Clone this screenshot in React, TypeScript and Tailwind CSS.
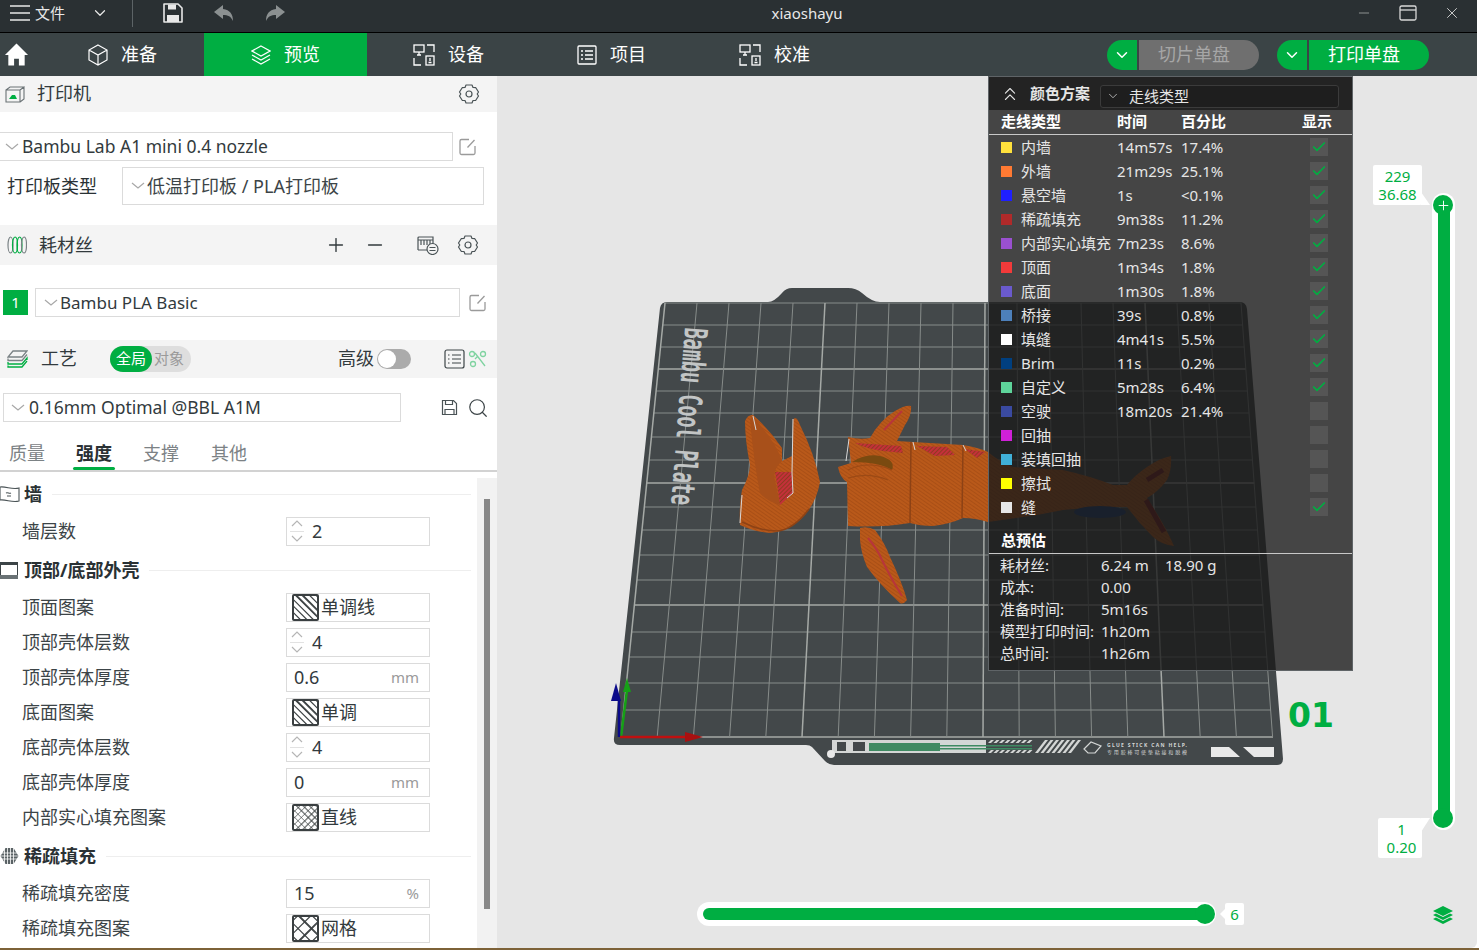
import React from 'react';
import { Check, ChevronDown, ChevronsUp, Minus, Plus, Search, X } from 'lucide-react';

const GREEN = '#00ae42';

// Legend rows: name, colour, time, percent, shown
const legendRows: [string, string, string, string, boolean][] = [
  ['内墙', '#ffe13c', '14m57s', '17.4%', true],
  ['外墙', '#ff7a33', '21m29s', '25.1%', true],
  ['悬空墙', '#1f1fff', '1s', '<0.1%', true],
  ['稀疏填充', '#b02a2a', '9m38s', '11.2%', true],
  ['内部实心填充', '#9a50d0', '7m23s', '8.6%', true],
  ['顶面', '#f23a3a', '1m34s', '1.8%', true],
  ['底面', '#6a5acd', '1m30s', '1.8%', true],
  ['桥接', '#4d80ba', '39s', '0.8%', true],
  ['填缝', '#ffffff', '4m41s', '5.5%', true],
  ['Brim', '#003f7f', '11s', '0.2%', true],
  ['自定义', '#5ed49a', '5m28s', '6.4%', true],
  ['空驶', '#3a4aa0', '18m20s', '21.4%', false],
  ['回抽', '#d020d8', '', '', false],
  ['装填回抽', '#40b0d8', '', '', false],
  ['擦拭', '#ffff00', '', '', false],
  ['缝', '#e6e6e6', '', '', true],
];

const totals: [string, string, string][] = [
  ['耗材丝:', '6.24 m', '18.90 g'],
  ['成本:', '0.00', ''],
  ['准备时间:', '5m16s', ''],
  ['模型打印时间:', '1h20m', ''],
  ['总时间:', '1h26m', ''],
];

const Chevron = () => (
  <svg width="16" height="8" viewBox="0 0 16 8" className="shrink-0">
    <path d="M2 1l6 5 6-5" fill="none" stroke="#a8a8a8" strokeWidth="1.2" />
  </svg>
);

const EditIcon = () => (
  <svg width="20" height="20" viewBox="0 0 20 20" className="shrink-0">
    <path d="M11 2.500H3.500a1.500 1.500 0 0 0-1.500 1.500v12a1.500 1.500 0 0 0 1.500 1.500h12a1.500 1.500 0 0 0 1.500-1.500V9" fill="none" stroke="#9a9a9a" strokeWidth="1.300" />
    <path d="M9.500 10.500L16.500 3" fill="none" stroke="#9a9a9a" strokeWidth="1.300" />
  </svg>
);

const Gear = () => (
  <svg width="22" height="22" viewBox="0 0 22 22" className="shrink-0">
    <path d="M8 2h6l1 2.500 2.800.2L20.500 9l-1.300 2 1.300 2-2.700 4.300-2.800.2L14 20H8l-1-2.500-2.800-.2L1.500 13l1.300-2-1.300-2 2.700-4.300 2.800-.2z" fill="none" stroke="#4a5356" strokeWidth="1.200" strokeLinejoin="round" />
    <circle cx="11" cy="11" r="3" fill="none" stroke="#4a5356" strokeWidth="1.200" />
  </svg>
);

const Hatch = ({ kind }: { kind: 'mono' | 'dense' | 'grid' }) => {
  const d = Array.from({ length: kind === 'grid' ? 3 : kind === 'dense' ? 8 : 6 }, (_, i) => i);
  const step = kind === 'grid' ? 13 : kind === 'dense' ? 6.5 : 6.5;
  return (
    <svg width="27" height="27" viewBox="0 0 27 27" className="shrink-0">
      <rect width="27" height="27" rx="1.500" fill="#fff" />
      <g stroke="#3a3f41" strokeWidth={kind === 'dense' ? 0.7 : 1.2}>
        {d.map((i) => (
          <React.Fragment key={i}>
            <line x1={-27 + i * step + step / 2} y1="0" x2={i * step + step / 2} y2="27" />
            <line x1={i * step + step / 2} y1="0" x2={27 + i * step + step / 2} y2="27" />
            {kind !== 'mono' && <line x1={i * step + step / 2} y1="0" x2={-27 + i * step + step / 2} y2="27" />}
            {kind !== 'mono' && <line x1={27 + i * step + step / 2} y1="0" x2={i * step + step / 2} y2="27" />}
          </React.Fragment>
        ))}
      </g>
      <rect x="1" y="1" width="25" height="25" rx="1" fill="none" stroke="#3a3f41" strokeWidth="2" />
    </svg>
  );
};

const Spin = () => (
  <svg width="16" height="27" viewBox="0 0 16 27" className="shrink-0">
    <path d="M3 8l5-5 5 5M3 18l5 5 5-5" fill="none" stroke="#b5b5b5" strokeWidth="1.200" />
    <line x1="1" y1="13.500" x2="15" y2="13.500" stroke="#e2e2e2" />
  </svg>
);

const Row = ({ label, children }: { label: string; children: React.ReactNode }) => (
  <div className="h-[35px] flex items-center pl-[22px]">
    <span className="w-[264px] text-[18px] text-[#3c4447]">{label}</span>
    <div className="w-[144px] h-[29px] border border-[#dbdbdb] flex items-center text-[18px] text-[#323a3d] bg-white">{children}</div>
  </div>
);

const SpinRow = ({ label, value }: { label: string; value: string }) => (
  <Row label={label}>
    <span className="ml-[2px] mr-[7px]"><Spin /></span>
    {value}
  </Row>
);

const UnitRow = ({ label, value, unit }: { label: string; value: string; unit: string }) => (
  <Row label={label}>
    <span className="ml-[7px] flex-1">{value}</span>
    <span className="mr-[10px] text-[15px] text-[#9a9a9a]">{unit}</span>
  </Row>
);

const PatternRow = ({ label, value, kind }: { label: string; value: string; kind: 'mono' | 'dense' | 'grid' }) => (
  <Row label={label}>
    <span className="ml-[5px] mr-[2px] flex"><Hatch kind={kind} /></span>
    {value}
  </Row>
);

const Section = ({ icon, title }: { icon: React.ReactNode; title: string }) => (
  <div className="h-[41px] pt-[1px] flex items-center">
    <span className="w-[24px] flex shrink-0">{icon}</span>
    <span className="text-[18px] font-bold text-[#2a3134]">{title}</span>
    <span className="ml-[10px] mr-[6px] flex-1 h-px bg-[#eeeeee]" />
  </div>
);

const TabItem = ({ icon, label, active }: { icon: React.ReactNode; label: string; active?: boolean }) => (
  <div className={`w-[163px] h-full flex items-center justify-center gap-[13px] text-[18px] text-white ${active ? 'bg-[#00ae42]' : ''}`}>
    {icon}
    <span>{label}</span>
  </div>
);

const DeviceIcon = () => (
  <svg width="22" height="22" viewBox="0 0 22 22" fill="none" stroke="#fff" strokeWidth="1.300">
    <rect x="1" y="1" width="10" height="7" />
    <path d="M4 11h4M6 8v3M14 1h7v7M1 14v7h7" />
    <rect x="13" y="12" width="8" height="9" />
    <path d="M17 14v3M15.500 18.500h3" />
  </svg>
);

const SplitButton = ({ label, muted }: { label: string; muted?: boolean }) => (
  <div className="flex h-[30px] gap-[2px]">
    <div className="w-[30px] rounded-l-[15px] bg-[#00ae42] flex items-center justify-center text-white">
      <ChevronDown size={18} strokeWidth={2} />
    </div>
    <div className={`w-[120px] pr-[10px] rounded-r-[15px] flex items-center justify-center text-[18px] ${muted ? 'bg-[#6f6f6f] text-[#a6a6a6]' : 'bg-[#00ae42] text-white'}`}>
      {label}
    </div>
  </div>
);

const TitleBar = () => (
  <div className="h-[33px] shrink-0 bg-[#2a3033] border-b border-black pb-[6px] flex items-center text-[#e8e8e8]">
    <svg width="20" height="18" viewBox="0 0 20 18" className="ml-[10px]">
      <path d="M0 2h20M0 9h20M0 16h20" stroke="#e8e8e8" strokeWidth="1.500" />
    </svg>
    <span className="ml-[5px] text-[15px] w-[56px]">文件</span>
    <ChevronDown size={18} strokeWidth={1.600} />
    <span className="ml-[23px] w-px h-[28px] bg-[#5c6366]" />
    <svg width="20" height="20" viewBox="0 0 20 20" className="ml-[30px]">
      <path d="M1 1h14l4 4v14H1z" fill="none" stroke="#e8e8e8" strokeWidth="1.600" strokeLinejoin="round" />
      <path d="M5 1.500h8v5H5zM4 12h12v7H4z" fill="#e8e8e8" />
    </svg>
    <svg width="20" height="16" viewBox="0 0 20 16" className="ml-[31px]">
      <path d="M9 0L0 7l9 7v-4c5 0 8 1.500 10 6 0-7-3-11-10-12z" fill="#8b9091" />
    </svg>
    <svg width="20" height="16" viewBox="0 0 20 16" className="ml-[31px]">
      <path d="M11 0l9 7-9 7v-4c-5 0-8 1.500-10 6 0-7 3-11 10-12z" fill="#8b9091" />
    </svg>
    <span className="ml-[482px] w-[80px] text-center text-[15px]">xiaoshayu</span>
    <span className="flex-1" />
    <Minus size={16} strokeWidth={1.200} className="mr-[27px] text-[#a6a9aa]" />
    <svg width="18" height="16" viewBox="0 0 18 16" className="mr-[26px]">
      <rect x="1" y="1" width="16" height="14" rx="1.500" fill="none" stroke="#d8d8d8" strokeWidth="1.300" />
      <path d="M1 5h16" stroke="#d8d8d8" strokeWidth="1.300" />
    </svg>
    <X size={18} strokeWidth={1.200} className="mr-[16px] text-[#d8d8d8]" />
  </div>
);

const TabBar = () => (
  <div className="h-[43px] shrink-0 bg-[#3b4446] flex items-center">
    <div className="w-[41px] pl-[4px] flex">
      <svg width="25" height="25" viewBox="0 0 26 25">
        <path d="M13 1L1 13h3.500v11h6v-7h5v7h6V13H25z" fill="#fff" />
      </svg>
    </div>
    <TabItem
      label="准备"
      icon={
        <svg width="20" height="22" viewBox="0 0 20 22" fill="none" stroke="#fff" strokeWidth="1.200">
          <path d="M10 1l9 5v10l-9 5-9-5V6zM1 6l9 5 9-5M10 11v10" />
        </svg>
      }
    />
    <TabItem
      active
      label="预览"
      icon={
        <svg width="20" height="20" viewBox="0 0 20 20" fill="none" stroke="#fff" strokeWidth="1.200">
          <path d="M10 1l9 5-9 5-9-5zM1 10l9 5 9-5M1 14l9 5 9-5" />
        </svg>
      }
    />
    <TabItem label="设备" icon={<DeviceIcon />} />
    <TabItem
      label="项目"
      icon={
        <svg width="20" height="20" viewBox="0 0 20 20" fill="none" stroke="#fff" strokeWidth="1.300">
          <rect x="1" y="1" width="18" height="18" rx="1" />
          <path d="M4 6h2M8 6h8M4 10h2M8 10h8M4 14h2M8 14h8" />
        </svg>
      }
    />
    <TabItem label="校准" icon={<DeviceIcon />} />
    <div className="ml-[251px] flex gap-[18px]">
      <SplitButton label="切片单盘" muted />
      <SplitButton label="打印单盘" />
    </div>
  </div>
);

const Sidebar = () => (
  <div className="w-[497px] shrink-0 h-full bg-white overflow-hidden">
    {/* Printer */}
    <div className="h-[36px] bg-[#f4f4f4] flex items-center pl-[5px] pr-[17px] pb-[1px]">
      <svg width="20" height="18" viewBox="0 0 20 18" fill="none" stroke="#6a7275" strokeWidth="1.100" className="shrink-0">
        <path d="M1 5h14v12H1zM15 5l4-3v12l-4 3M1 5l4-3h14" />
        <path d="M4 14h8l-2-4H7z" fill="#00ae42" stroke="none" />
      </svg>
      <span className="ml-[12px] flex-1 text-[18px] text-[#323a3d]">打印机</span>
      <Gear />
    </div>
    <div className="mt-[20px] flex items-center h-[29px]">
      <div className="w-[453px] h-full border border-l-0 border-[#dbdbdb] flex items-center pl-[4px] gap-[2px] text-[17.500px] text-[#323a3d]">
        <Chevron />
        Bambu Lab A1 mini 0.4 nozzle
      </div>
      <span className="ml-[5px] flex"><EditIcon /></span>
    </div>
    <div className="mt-[6px] flex items-center h-[38px]">
      <span className="ml-[7px] w-[115px] text-[18px] text-[#2a3134]">打印板类型</span>
      <div className="w-[362px] h-full border border-[#dbdbdb] flex items-center pl-[7px] gap-[1px] text-[18px] text-[#3c4447]">
        <Chevron />
        低温打印板 / PLA打印板
      </div>
    </div>

    {/* Filament */}
    <div className="mt-[20px] h-[40px] bg-[#f4f4f4] flex items-center pl-[7px] pr-[18px]">
      <svg width="20" height="18" viewBox="0 0 20 18" fill="none" strokeWidth="1.200" className="shrink-0">
        <ellipse cx="3.500" cy="9" rx="2.500" ry="8" stroke="#7a8285" />
        <ellipse cx="8" cy="9" rx="2.500" ry="8" stroke="#00ae42" />
        <ellipse cx="12.500" cy="9" rx="2.500" ry="8" stroke="#00ae42" />
        <ellipse cx="17" cy="9" rx="2.500" ry="8" stroke="#7a8285" />
      </svg>
      <span className="ml-[12px] text-[18px] text-[#323a3d]">耗材丝</span>
      <Plus size={22} strokeWidth={1.500} className="ml-[232px] text-[#323a3d]" />
      <Minus size={22} strokeWidth={1.500} className="ml-[17px] text-[#323a3d]" />
      <svg width="23" height="20" viewBox="0 0 23 20" fill="none" stroke="#4a5356" strokeWidth="1.200" className="ml-[30px] shrink-0">
        <path d="M2 15V3a1 1 0 0 1 1-1h14v7M2 5h15M2 15h9" />
        <path d="M5 5v5M8 5v5M11 5v5M14 5v4" />
        <circle cx="16.500" cy="14" r="5.500" fill="#f4f4f4" />
        <path d="M13.500 12.500h6M19.500 15.500h-6" />
      </svg>
      <span className="ml-[18px] flex"><Gear /></span>
    </div>
    <div className="mt-[23px] flex items-center h-[29px]">
      <div className="ml-[3px] w-[25px] h-[25px] bg-[#00ae42] text-white text-[15px] flex items-center justify-center">1</div>
      <div className="ml-[7px] w-[425px] h-full border border-[#dbdbdb] flex items-center pl-[7px] gap-[1px] text-[17px] text-[#323a3d]">
        <Chevron />
        Bambu PLA Basic
      </div>
      <span className="ml-[8px] flex"><EditIcon /></span>
    </div>

    {/* Process */}
    <div className="mt-[23px] h-[38px] bg-[#f4f4f4] flex items-center pl-[7px] pb-[1px]">
      <svg width="21" height="18" viewBox="0 0 21 18" fill="none" strokeWidth="1.300" className="shrink-0">
        <path d="M6 1h14l-5 6H1z" stroke="#7a8285" />
        <path d="M1 8.500v2h14l5-6" stroke="#7a8285" />
        <path d="M1 12v2h14l5-6v2" stroke="#00ae42" />
        <path d="M1 15.500v1.500h14l5-6" stroke="#00ae42" />
      </svg>
      <span className="ml-[13px] text-[18px] text-[#323a3d]">工艺</span>
      <div className="ml-[33px] w-[81px] h-[26px] rounded-[13px] bg-[#dedede] flex items-center text-[15px]">
        <span className="w-[42px] h-full rounded-[13px] bg-[#00ae42] text-white flex items-center justify-center">全局</span>
        <span className="ml-[2px] text-[#9a9a9a]">对象</span>
      </div>
      <span className="ml-[147px] text-[18px] text-[#323a3d]">高级</span>
      <div className="ml-[3px] w-[34px] h-[20px] rounded-[10px] bg-[#ababab] flex items-center pl-[1px]">
        <span className="w-[18px] h-[18px] rounded-full bg-white" />
      </div>
      <svg width="21" height="20" viewBox="0 0 21 20" fill="none" stroke="#3c4447" strokeWidth="1.200" className="ml-[33px] shrink-0">
        <rect x="1" y="1" width="19" height="18" rx="2" />
        <path d="M4 6h1.500M8 6h9M4 10h1.500M8 10h9M4 14h1.500M8 14h9" />
      </svg>
      <svg width="20" height="18" viewBox="0 0 20 18" fill="none" stroke="#7fd3a0" strokeWidth="1.300" className="ml-[3px] shrink-0">
        <circle cx="4" cy="4" r="2.500" />
        <circle cx="15" cy="4" r="2.500" />
        <circle cx="5" cy="14" r="2.500" />
        <path d="M7 3l10 13M7 9l3-3" />
      </svg>
    </div>
    <div className="mt-[15px] flex items-center h-[29px]">
      <div className="ml-[3px] w-[398px] h-full border border-[#dbdbdb] flex items-center pl-[6px] gap-[3px] text-[17.500px] text-[#323a3d]">
        <Chevron />
        0.16mm Optimal @BBL A1M
      </div>
      <svg width="17" height="17" viewBox="0 0 17 17" fill="none" stroke="#4a5356" strokeWidth="1.200" className="ml-[40px] shrink-0">
        <path d="M1.500 1.500h11l3 3v11h-14zM4.500 1.500v4h7v-4M4 15.500v-5h9v5" />
      </svg>
      <Search size={22} strokeWidth={1.300} className="ml-[9px] text-[#3c4447]" />
    </div>

    {/* Tabs */}
    <div className="mt-[18px] h-[30px] border-b-2 border-[#d2d2d2] flex text-[18px] text-[#7c8285] box-content">
      <span className="ml-[9px] w-[67px]">质量</span>
      <span className="relative w-[67px] font-bold text-[#2a3134]">
        强度
        <span className="absolute left-[-3px] top-[27px] w-[42px] h-[3px] rounded-sm bg-[#00ae42]" />
      </span>
      <span className="w-[68px]">支撑</span>
      <span>其他</span>
    </div>

    <div className="flex">
      <div className="w-[477px] shrink-0 pt-[1px]">
        <Section
          title="墙"
          icon={
            <svg width="20" height="18" viewBox="0 0 20 18" fill="none" stroke="#4a5356" strokeWidth="1.100" className="shrink-0">
              <path d="M0 2c6-1 12 3 19 1v13c-7 2-13-2-19-1zM6 8c2-1 3 1 5 0M7 11h4" />
            </svg>
          }
        />
        <SpinRow label="墙层数" value="2" />
        <Section
          title="顶部/底部外壳"
          icon={
            <svg width="18" height="17" viewBox="0 0 18 17" className="shrink-0">
              <rect x="0.500" y="0.500" width="17" height="16" fill="none" stroke="#3c4447" />
              <rect x="0" y="0" width="18" height="3" fill="#3c4447" />
              <rect x="0" y="13" width="18" height="4" fill="#6a7275" />
            </svg>
          }
        />
        <PatternRow label="顶面图案" value="单调线" kind="mono" />
        <SpinRow label="顶部壳体层数" value="4" />
        <UnitRow label="顶部壳体厚度" value="0.6" unit="mm" />
        <PatternRow label="底面图案" value="单调" kind="mono" />
        <SpinRow label="底部壳体层数" value="4" />
        <UnitRow label="底部壳体厚度" value="0" unit="mm" />
        <PatternRow label="内部实心填充图案" value="直线" kind="dense" />
        <Section
          title="稀疏填充"
          icon={
            <svg width="19" height="18" viewBox="0 0 18 18" className="shrink-0">
              <path d="M5 1h8l5 8-5 8H5L0 9z" fill="#5a6265" />
              <path d="M0 6h18M0 9h18M0 12h18M4 1v16M7 1v16M10 1v16M13 1v16" stroke="#fff" strokeWidth="0.800" />
            </svg>
          }
        />
        <UnitRow label="稀疏填充密度" value="15" unit="%" />
        <PatternRow label="稀疏填充图案" value="网格" kind="grid" />
      </div>
      <div className="w-[20px] mt-[6px] bg-[#f2f2f2] h-[500px]">
        <div className="ml-[7px] mt-[21px] w-[6px] h-[410px] bg-[#888888]" />
      </div>
    </div>
  </div>
);

// Build plate and model, drawn in page coordinates
const hLines = [303, 325, 347, 369, 391, 413, 437, 460, 483, 507, 530, 555, 580, 605, 632, 657, 683, 710, 737];

const Plate = () => (
  <svg viewBox="497 76 980 872" className="absolute left-0 top-0 w-[980px] h-[872px]">
    <defs>
      <pattern id="layers" width="3" height="3" patternUnits="userSpaceOnUse" patternTransform="rotate(35)">
        <rect width="3" height="3" fill="#b9591a" />
        <rect width="3" height="1" fill="#a94f16" />
      </pattern>
      <pattern id="infill" width="3" height="3" patternUnits="userSpaceOnUse" patternTransform="rotate(45)">
        <rect width="3" height="3" fill="#c4303a" />
        <rect width="1" height="3" fill="#8f3a20" />
      </pattern>
    </defs>
    <path
      d="M660 308q1-6 7-6h101q6 0 14-9 4-5 10-5h56q8 0 14 5 10 9 18 9h360q6 0 7 7l36 450q0 6-6 6H834q-5 0-9-4l-13-14q-2-2-6-2H620q-7 0-6-7z"
      fill="#43484a"
    />
    {hLines.map((y, i) => {
      const t = (y - 303) / 434;
      return (
        <line
          key={y}
          x1={665 - 44 * t}
          y1={y}
          x2={1241 + 32 * t}
          y2={y}
          stroke={i % 5 === 3 ? '#a5a9a6' : '#878c8a'}
          strokeWidth={i % 5 === 3 ? 1.500 : 1}
        />
      );
    })}
    {Array.from({ length: 19 }, (_, i) => (
      <line
        key={i}
        x1={665 + 32 * i}
        y1="303"
        x2={621 + 36.2 * i}
        y2="737"
        stroke={i % 5 === 0 ? '#a5a9a6' : '#878c8a'}
        strokeWidth={i % 5 === 0 ? 1.500 : 1}
      />
    ))}

    <text
      transform="translate(685 327) rotate(94.500) scale(1 1.450)"
      textLength="178"
      lengthAdjust="spacingAndGlyphs"
      fontFamily="'DejaVu Sans Mono', monospace"
      fontWeight="700"
      fontSize="22"
      fill="#c2c5c5"
    >
      Bambu Cool Plate
    </text>

    {/* Model: claw */}
    <path
      d="M745 421q3-7 8-6 17 15 29 33l0 13 10-5 1-36q3-6 7 5 15 30 20 57-4 23-20 38-15 12-30 13-15-1-30-8-1-20 2-35 8-15 8-25-5-25-5-44z"
      fill="url(#layers)"
    />
    <path d="M752 416q23 24 30 45-10 9-7 19 3 15 5 25-14-4-20-12-6-30-10-73z" fill="#a8501a" />
    <path d="M775 472h17l1 21-13 12q-2-16-5-33z" fill="url(#infill)" />
    <path d="M793 419l-1 54 1 20-6 5M753 416l3 14M742 495l-2 28" fill="none" stroke="#d8d8d8" strokeWidth="1" />
    <path d="M742 522q18 9 35 9 16-1 32-22" fill="none" stroke="#8d4215" strokeWidth="1.500" />

    {/* Model: body and tail, runs on under the legend */}
    <path
      d="M848 437q12 3 22 1 10-18 25-27 10-6 16-5 1 9-6 19-5 10-8 16l16 1 50 3q17 3 25 7 12 10 25 15l50 3q27 6 50 15h14q8-10 20-18 13-9 24-11 1 14-4 24-9 12-20 18 18 27 27 48-12-1-21-9-15-15-26-30h-30l-34 3-26 5-49 7q-13-4-25-4-13 6-30 8-13 0-23-3-30 5-62 3l-1-44q-7-4-9-15l13-4z"
      fill="url(#layers)"
    />
    <path d="M855 443l46 3 2 7-20-2q-16-2-28-8zM917 446l30 1 8 8-20 1zM965 449l20 3-8 6z" fill="url(#infill)" />
    <path d="M852 462q14-9 28-6 16 4 12 14-12-8-40-8z" fill="#7a4a10" />
    <path d="M848 470q20-10 44 0M848 478q20-6 40 2" fill="none" stroke="#9c4a15" strokeWidth="1.200" />
    <path d="M911 442l-1 81M963 445l-1 73" stroke="#8d4215" strokeWidth="1.500" />
    <path d="M849 439l-3 22M913 442l2 8M963 445l3 6" stroke="#d8d8d8" strokeWidth="1" />
    <path d="M884 430l18-19" stroke="#b8353a" strokeWidth="2" />
    <path d="M860 528q8-2 15 2 10 13 15 27 12 25 17 43-4 5-7 3-20-18-33-36-6-14-7-27z" fill="url(#layers)" />
    <path d="M868 538q10 12 14 22 10 20 20 36" stroke="#b8353a" strokeWidth="2" fill="none" />
    <path d="M1147 480l16-10M1146 500l18 32" stroke="#7a1a1a" strokeWidth="5" />
    <ellipse cx="1100" cy="512" rx="26" ry="6" fill="#1a3a70" />

    {/* Strip along the front edge */}
    <path d="M832 740h154v13H832z" fill="#d4d6d5" />
    <path d="M869 743h71v8h-71z" fill="#3f8a62" />
    <path d="M940 745h46v1.500h-46zM940 748h46v1.500h-46z" fill="#3f8a62" />
    <path d="M986 745h46v1.500h-46zM986 748h46v1.500h-46z" fill="#3f8a62" />
    {Array.from({ length: 8 }, (_, i) => (
      <React.Fragment key={i}>
        <path d={`M${988 + i * 5.500} 743l3-3h3l-3 3z`} fill="#d4d6d5" />
        <path d={`M${988 + i * 5.500} 753l3-3h3l-3 3z`} fill="#d4d6d5" />
      </React.Fragment>
    ))}
    {Array.from({ length: 7 }, (_, i) => (
      <path key={i} d={`M${1035 + i * 5.500} 753l10-13h3l-10 13z`} fill="#d4d6d5" />
    ))}
    <circle cx="831" cy="754" r="4" fill="#e8e8e8" />
    <path d="M837 742h9v9h-9zM853 742h12v9h-12z" fill="#43484a" />
    <path d="M1084 749l7-7 10 4-6 7h-7z" fill="none" stroke="#d4d6d5" strokeWidth="1.200" />
    <text x="1107" y="747" fontSize="5" fontWeight="700" fill="#d4d6d5" textLength="80">GLUE STICK CAN HELP.</text>
    <text x="1107" y="754" fontSize="5" fill="#d4d6d5" textLength="80">专用胶棒可使垫粘接和脱模</text>
    <path d="M1211 747h18l11 10h-29zM1243 747h31v10h-20z" fill="#e8e8e8" />
    <text x="1288" y="727" fontSize="34" fontWeight="900" fontFamily="'DejaVu Sans', sans-serif" fill={GREEN} textLength="46" lengthAdjust="spacingAndGlyphs">01</text>

    {/* Axes */}
    <path d="M621 737L627 690" stroke="#16a016" strokeWidth="2.500" />
    <path d="M627 678l-4 14h8z" fill="#16a016" />
    <path d="M619 737v-38" stroke="#0b0b8a" strokeWidth="2.500" />
    <path d="M616 683l-5 18h10z" fill="#0b0b8a" />
    <path d="M620 737h66" stroke="#c01010" strokeWidth="2.500" />
    <path d="M703 737l-18-5v10z" fill="#a81010" />
  </svg>
);

const Legend = () => (
  <div className="absolute left-[491px] top-0 w-[365px] h-[595px] bg-[rgba(25,25,25,0.79)] border border-[#5f6467] text-[#e6e6e6] text-[15px]">
    <div className="h-[33px] bg-[#232323] flex items-center pl-[10px]">
      <ChevronsUp size={22} strokeWidth={1.200} />
      <span className="ml-[9px] w-[70px] text-[15px] font-bold whitespace-nowrap">颜色方案</span>
      <div className="w-[239px] h-[23px] mt-[5px] border border-[#3b3b3b] rounded-[3px] bg-[#1e1e1e] flex items-center pl-[5px] gap-[9px] text-[15px]">
        <ChevronDown size={14} strokeWidth={1.200} />
        走线类型
      </div>
    </div>
    <div className="h-[25px] border-b border-[#c8c8c8] pb-[2px] pl-[12px] flex items-center font-bold text-[15px] text-white">
      <span className="w-[116px]">走线类型</span>
      <span className="w-[64px]">时间</span>
      <span className="w-[121px]">百分比</span>
      <span>显示</span>
    </div>
    {legendRows.map(([name, color, time, pct, shown]) => (
      <div key={name} className="h-[24px] pl-[12px] flex items-center">
        <span className="w-[11px] h-[11px] shrink-0" style={{ backgroundColor: color }} />
        <span className="ml-[9px] w-[96px] shrink-0 whitespace-nowrap">{name}</span>
        <span className="w-[64px] shrink-0">{time}</span>
        <span className="w-[129px] shrink-0">{pct}</span>
        <span className="w-[18px] h-[18px] bg-[#555555] flex items-center justify-center">
          {shown && <Check size={16} strokeWidth={2.500} className="text-[#00ae42]" />}
        </span>
      </div>
    ))}
    <div className="mt-[10px] h-[25px] border-b border-[#c8c8c8] pl-[12px] font-bold text-[15px] text-white">总预估</div>
    <div>
      {totals.map(([k, a, b]) => (
        <div key={k} className="h-[22px] pl-[11px] flex items-center whitespace-nowrap">
          <span className="w-[101px]">{k}</span>
          <span className="w-[64px]">{a}</span>
          <span>{b}</span>
        </div>
      ))}
    </div>
  </div>
);

const Bubble = ({ children, className }: { children: React.ReactNode; className: string }) => (
  <div className={`absolute bg-white rounded-[2px] text-[#00ae42] text-[15px] leading-[18px] text-center ${className}`}>{children}</div>
);

const Sliders = () => (
  <>
    {/* Layer slider */}
    <div className="absolute left-[935px] top-[117px] w-[23px] h-[637px] rounded-[12px] bg-white flex justify-center py-[12px]">
      <div className="w-[12px] h-full bg-[#00ae42]" />
    </div>
    <div className="absolute left-[936px] top-[119px] w-[20px] h-[20px] rounded-full bg-[#00ae42] flex items-center justify-center text-white">
      <Plus size={15} strokeWidth={1.500} />
    </div>
    <div className="absolute left-[936px] top-[732px] w-[20px] h-[20px] rounded-full bg-[#00ae42]" />
    <Bubble className="left-[876px] top-[89px] w-[49px] h-[40px] pt-[2px]">
      229
      <br />
      36.68
    </Bubble>
    <Bubble className="left-[881px] top-[742px] w-[44px] h-[40px] pt-[2px] pl-[3px]">
      1
      <br />
      0.20
    </Bubble>
    <svg width="12" height="14" viewBox="0 0 12 14" className="absolute left-[924px] top-[116px]">
      <path d="M0 0v13h9z" fill="#fff" />
    </svg>
    <svg width="12" height="14" viewBox="0 0 12 14" className="absolute left-[924px] top-[742px]">
      <path d="M0 14V0h9z" fill="#fff" />
    </svg>

    {/* Move slider */}
    <div className="absolute left-[200px] top-[826px] w-[519px] h-[24px] rounded-[12px] bg-white flex items-center px-[6px]">
      <div className="w-[502px] h-[12px] rounded-l-[6px] bg-[#00ae42]" />
    </div>
    <div className="absolute left-[698px] top-[828px] w-[20px] h-[20px] rounded-full bg-[#00ae42]" />
    <Bubble className="left-[728px] top-[827px] w-[19px] h-[22px] leading-[22px]">6</Bubble>
    <svg width="6" height="10" viewBox="0 0 6 10" className="absolute left-[723px] top-[833px]">
      <path d="M5 0v10L0 5z" fill="#fff" />
    </svg>

    <svg width="20" height="20" viewBox="0 0 20 20" className="absolute left-[936px] top-[829px]">
      <path d="M10 1l10 5-10 5L0 6z" fill="#00ae42" />
      <path d="M0 10l3-1.500 7 3.500 7-3.500 3 1.500-10 5z" fill="#00ae42" />
      <path d="M0 14l3-1.500 7 3.500 7-3.500 3 1.500-10 5z" fill="#00ae42" />
    </svg>
  </>
);

const App: React.FC = () => {
  return (
    <div className="w-[1479px] h-[950px] bg-white flex flex-col overflow-hidden font-['Noto_Sans','Noto_Sans_CJK_SC',sans-serif]">
      <div className="w-[1477px] h-[948px] flex flex-col rounded-br-[6px] overflow-hidden">
        <TitleBar />
        <TabBar />
        <div className="flex-1 flex min-h-0">
          <Sidebar />
          <div className="relative flex-1 bg-[#e6e6e6] overflow-hidden">
            <Plate />
            <Legend />
            <Sliders />
          </div>
        </div>
      </div>
      <div className="h-[2px] bg-[#7d6238]" />
    </div>
  );
};

export default App;
